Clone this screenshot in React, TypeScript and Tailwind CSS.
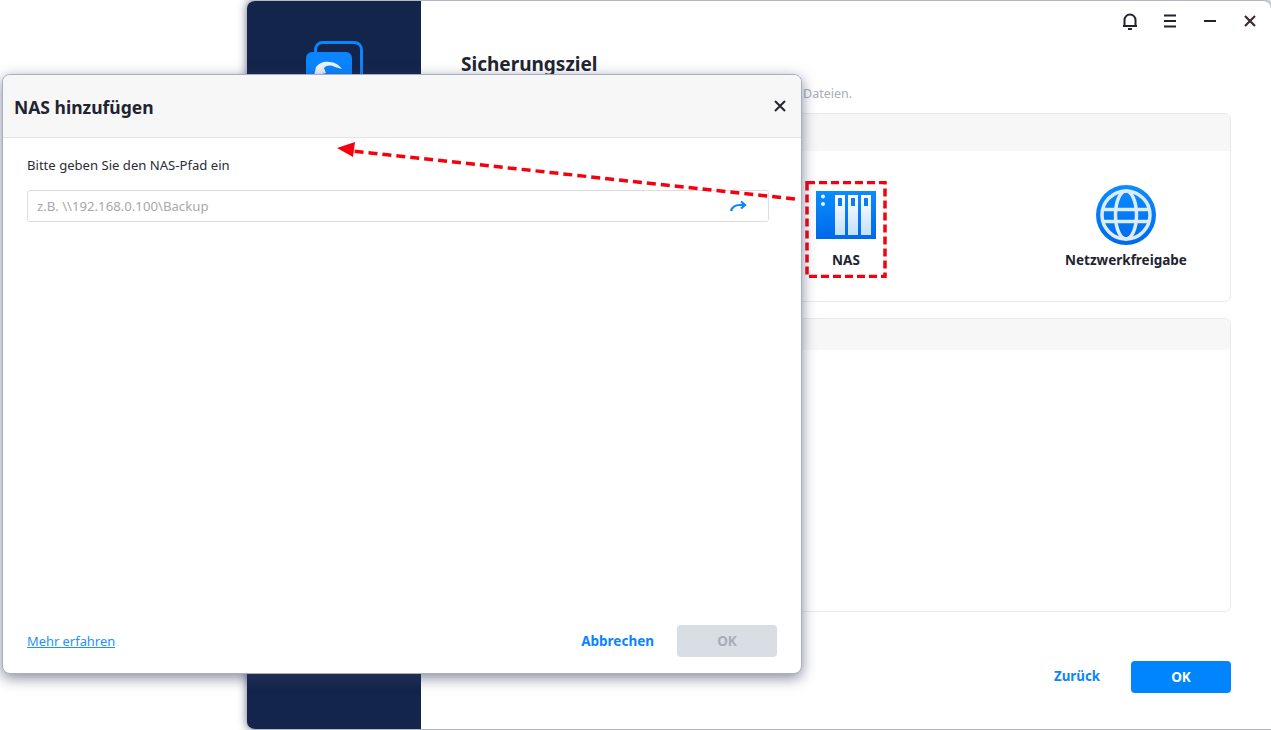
const font = { fontFamily: '"Noto Sans", sans-serif' }

function Logo() {
  return (
    <svg width="58" height="60" viewBox="0 0 58 60" className="ml-[59px] mt-[40px]">
      <rect x="9.500" y="1.500" width="46" height="46" rx="7" fill="none" stroke="#0a84ff" strokeWidth="3" />
      <rect x="0" y="11" width="46" height="46" rx="6" fill="#0a84ff" />
      <path d="M10 26c3-4 8-6 13-5 6 0 10 3 13 7l-7-2c-4-2-8-2-11 1l2 5-12 3z" fill="#eaf3ff" />
    </svg>
  )
}

function NasIcon() {
  return (
    <svg width="60" height="48" viewBox="0 0 60 48">
      <defs>
        <linearGradient id="nasBg" x1="0" y1="0" x2="0" y2="1">
          <stop offset="0" stopColor="#0a8dff" />
          <stop offset="1" stopColor="#0069ea" />
        </linearGradient>
        <linearGradient id="nasBar" x1="0" y1="0" x2="0" y2="1">
          <stop offset="0" stopColor="#ffffff" />
          <stop offset="1" stopColor="#c4e0fb" />
        </linearGradient>
      </defs>
      <rect width="60" height="48" fill="url(#nasBg)" />
      <circle cx="7" cy="5.500" r="2" fill="#e6f2ff" />
      <circle cx="7" cy="13" r="2" fill="#e6f2ff" />
      {[19, 32, 45].map((x) => (
        <g key={x}>
          <rect x={x} y="4" width="10" height="40" fill="url(#nasBar)" />
          <rect x={x + 3} y="7" width="4" height="8" fill="#0a7cf5" />
        </g>
      ))}
    </svg>
  )
}

function GlobeIcon() {
  return (
    <svg width="60" height="60" viewBox="0 0 60 60">
      <defs>
        <linearGradient id="globeBg" x1="0" y1="0" x2="0" y2="1">
          <stop offset="0" stopColor="#0a8dff" />
          <stop offset="1" stopColor="#0069ea" />
        </linearGradient>
      </defs>
      <circle cx="30" cy="30" r="30" fill="url(#globeBg)" />
      <g fill="none" stroke="#dcecfd" strokeWidth="3.500">
        <circle cx="30" cy="30" r="24" />
        <ellipse cx="30" cy="30" rx="10.500" ry="24" />
        <path d="M7 24.500h46M7 36.500h46" />
      </g>
    </svg>
  )
}

function WindowIcons() {
  return (
    <div className="flex items-center justify-end h-[40px] pr-[11px] gap-[20px]">
      <svg width="20" height="20" viewBox="0 0 20 20" fill="none" stroke="#23232b" strokeWidth="2">
        <path d="M4.500 15V9a5.500 5.500 0 0 1 11 0v6" />
        <path d="M3 15h14" />
        <path d="M8 18h4" />
      </svg>
      <svg width="20" height="20" viewBox="0 0 20 20" fill="none" stroke="#23232b" strokeWidth="2">
        <path d="M4 4.500h12M4 10h12M4 15.500h12" />
      </svg>
      <svg width="20" height="20" viewBox="0 0 20 20" fill="none" stroke="#23232b" strokeWidth="2">
        <path d="M4 10h12" />
      </svg>
      <svg width="20" height="20" viewBox="0 0 20 20" fill="none" stroke="#3d2a33" strokeWidth="2.200">
        <path d="M5 5l10 10M15 5L5 15" />
      </svg>
    </div>
  )
}

function MainWindow() {
  return (
    <div className="ml-[247px] h-[730px] flex rounded-l-[8px] rounded-tr-[8px] bg-white overflow-hidden border-y border-[#b4b8c4] shadow-[0_0_10px_rgba(60,70,105,0.8)]">
      <div className="w-[174px] shrink-0 bg-[#14254b]">
        <Logo />
      </div>
      <div className="flex-1 flex flex-col">
        <WindowIcons />
        <div className="pl-[40px] pr-[40px]">
          <h1 className="mt-[9px] text-[19px] leading-[28px] font-bold text-[#1f2430]">Sicherungsziel</h1>
          <p className="mt-[7px] pl-[342px] text-[12.500px] leading-[18px] text-[#a8adb8]">Dateien.</p>

          <section className="mt-[10px] h-[189px] border border-[#e8eaed] rounded-[6px] overflow-hidden">
            <div className="h-[37px] bg-[#f7f7f7]" />
            <div className="flex pl-[354px] pt-[29px]">
              <div className="relative w-[60px] flex flex-col items-center">
                <svg className="absolute left-[-11px] top-px" width="82" height="97" viewBox="0 0 82 97" fill="none">
                  <rect x="2" y="1.500" width="78" height="94" stroke="#f5000f" strokeWidth="3.500" strokeDasharray="8 4" />
                </svg>
                <div className="mt-[11px]">
                  <NasIcon />
                </div>
                <span className="mt-[11px] text-[13.500px] leading-[20px] font-bold text-[#1f2430]">NAS</span>
              </div>
              <div className="ml-[220px] w-[60px] flex flex-col items-center">
                <div className="mt-[5px]">
                  <GlobeIcon />
                </div>
                <span className="mt-[5px] text-[13.500px] leading-[20px] font-bold text-[#1f2430] whitespace-nowrap">Netzwerkfreigabe</span>
              </div>
            </div>
          </section>

          <section className="mt-[16px] h-[294px] border border-[#e8eaed] rounded-[6px] overflow-hidden">
            <div className="h-[31px] bg-[#f7f7f7]" />
          </section>

          <div className="mt-[49px] flex items-center justify-end">
            <button className="text-[13.300px] font-bold text-[#0a84ff]">Zurück</button>
            <button className="ml-[31px] w-[100px] h-[32px] rounded-[4px] bg-[#0085ff] text-[13.500px] font-bold text-white">OK</button>
          </div>
        </div>
      </div>
    </div>
  )
}

function Dialog() {
  return (
    <div className="absolute left-[2px] top-[74px] w-[800px] h-[600px] flex flex-col bg-white rounded-[8px] overflow-hidden border border-[#a9aec0] shadow-[0_4px_14px_rgba(50,60,95,0.6)]">
      <div className="h-[63px] shrink-0 flex items-center justify-between pl-[11px] pr-[13px] bg-[#f7f7f7] border-b border-[#e2e3e5]">
        <h2 className="pt-[3px] text-[17.500px] font-bold text-[#1f2430]">NAS hinzufügen</h2>
        <svg width="16" height="16" viewBox="0 0 16 16" fill="none" stroke="#26262f" strokeWidth="2">
          <path d="M3 3l10 10M13 3L3 13" />
        </svg>
      </div>
      <div className="flex-1 flex flex-col pl-[24px] pr-[32px]">
        <p className="mt-[17px] text-[13.100px] leading-[20px] text-[#2a2e38]">Bitte geben Sie den NAS-Pfad ein</p>
        <div className="mt-[15px] h-[32px] flex items-center justify-between pl-[9px] pr-[21px] border border-[#dcdde0] rounded-[3px]">
          <span className="pt-[2px] text-[13.200px] text-[#a9a9a9]">z.B. \\192.168.0.100\Backup</span>
          <svg width="18" height="12" viewBox="0 0 18 12" fill="none" stroke="#0a84ff" strokeWidth="2.200">
            <path d="M2 11c1-4 4-6 9-6h5" />
            <path d="M12 1.500l4 3.500-4 3.500" />
          </svg>
        </div>
        <div className="mt-auto mb-[16px] -mr-[8px] flex items-center justify-between">
          <a className="pt-[2px] text-[12.900px] text-[#1e90ff] underline">Mehr erfahren</a>
          <div className="flex items-center">
            <button className="text-[13.500px] font-bold text-[#0a84ff]">Abbrechen</button>
            <button className="ml-[23px] w-[100px] h-[32px] rounded-[4px] bg-[#d9dde4] text-[13.500px] font-bold text-[#a9adb5]">OK</button>
          </div>
        </div>
      </div>
    </div>
  )
}

function Arrow() {
  return (
    <svg className="absolute left-0 top-0 pointer-events-none" width="1271" height="730">
      <path d="M795 199L352 151" stroke="#f5000f" strokeWidth="3.500" strokeDasharray="9 5" fill="none" />
      <path d="M337 148l18-6-2 15z" fill="#f5000f" />
    </svg>
  )
}

export default function App() {
  return (
    <div className="relative w-[1271px] h-[730px] bg-white overflow-hidden" style={font}>
      <MainWindow />
      <Dialog />
      <Arrow />
    </div>
  )
}
